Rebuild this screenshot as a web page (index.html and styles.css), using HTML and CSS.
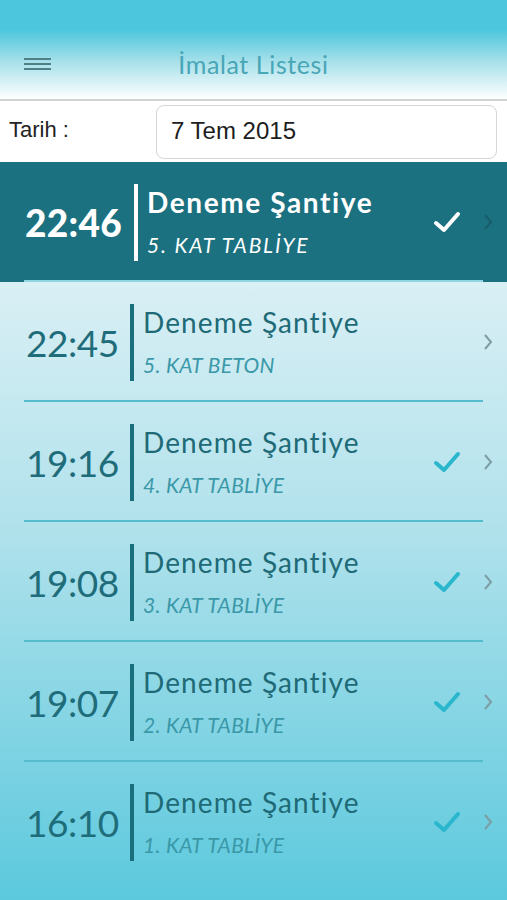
FILE: index.html
```html
<html>
<head>
    <meta charset="utf-8">
    <title>İmalat Listesi</title>
    <link rel="stylesheet" href="styles.css">
</head>

<body>
<div class="screen">
    <div class="navbar">
        <div class="menu">
            <span></span><span></span><span></span>
        </div>
        <div class="title">İmalat Listesi</div>
    </div>

    <div class="date-row">
        <div class="label">Tarih :</div>
        <div class="date-box">7 Tem 2015</div>
    </div>

    <div class="list">
        <div class="item selected">
            <div class="time">22:46</div>
            <div class="bar"></div>
            <div class="info">
                <div class="site">Deneme Şantiye</div>
                <div class="job">5. KAT TABLİYE</div>
            </div>
            <svg class="check" viewBox="0 0 28 24"><path d="M3 13 L11 20 L25 4"/></svg>
            <svg class="chevron" viewBox="0 0 10 18"><path d="M2 2 L8 9 L2 16"/></svg>
        </div>
        <div class="item">
            <div class="time">22:45</div>
            <div class="bar"></div>
            <div class="info">
                <div class="site">Deneme Şantiye</div>
                <div class="job">5. KAT BETON</div>
            </div>
            <svg class="chevron" viewBox="0 0 10 18"><path d="M2 2 L8 9 L2 16"/></svg>
        </div>
        <div class="item">
            <div class="time">19:16</div>
            <div class="bar"></div>
            <div class="info">
                <div class="site">Deneme Şantiye</div>
                <div class="job">4. KAT TABLİYE</div>
            </div>
            <svg class="check" viewBox="0 0 28 24"><path d="M3 13 L11 20 L25 4"/></svg>
            <svg class="chevron" viewBox="0 0 10 18"><path d="M2 2 L8 9 L2 16"/></svg>
        </div>
        <div class="item">
            <div class="time">19:08</div>
            <div class="bar"></div>
            <div class="info">
                <div class="site">Deneme Şantiye</div>
                <div class="job">3. KAT TABLİYE</div>
            </div>
            <svg class="check" viewBox="0 0 28 24"><path d="M3 13 L11 20 L25 4"/></svg>
            <svg class="chevron" viewBox="0 0 10 18"><path d="M2 2 L8 9 L2 16"/></svg>
        </div>
        <div class="item">
            <div class="time">19:07</div>
            <div class="bar"></div>
            <div class="info">
                <div class="site">Deneme Şantiye</div>
                <div class="job">2. KAT TABLİYE</div>
            </div>
            <svg class="check" viewBox="0 0 28 24"><path d="M3 13 L11 20 L25 4"/></svg>
            <svg class="chevron" viewBox="0 0 10 18"><path d="M2 2 L8 9 L2 16"/></svg>
        </div>
        <div class="item last">
            <div class="time">16:10</div>
            <div class="bar"></div>
            <div class="info">
                <div class="site">Deneme Şantiye</div>
                <div class="job">1. KAT TABLİYE</div>
            </div>
            <svg class="check" viewBox="0 0 28 24"><path d="M3 13 L11 20 L25 4"/></svg>
            <svg class="chevron" viewBox="0 0 10 18"><path d="M2 2 L8 9 L2 16"/></svg>
        </div>
    </div>
</div>
</body>
</html>
```

FILE: styles.css
```css
*{
    margin: 0;
    padding: 0;
    box-sizing: border-box;
}
body{
    font-family: 'Lato', 'Noto Sans', sans-serif;
    width: 507px;
    height: 900px;
    overflow: hidden;
}
.screen{
    height: 900px;
    display: flex;
    flex-direction: column;
    background: linear-gradient(to bottom, #e4f4f7 0%, #e0f2f6 240px, #b2e2ec 520px, #5cc9dd 900px);
}
.navbar{
    height: 101px;
    flex: none;
    display: flex;
    align-items: center;
    padding: 30px 0 0 24px;
    background: linear-gradient(to bottom, #4cc6dc 0%, #4cc6dc 30%, #a6e0ea 62%, #ffffff 100%);
    border-bottom: 2px solid #d2d4d4;
}
.menu{
    display: flex;
    flex-direction: column;
    gap: 3px;
    width: 27px;
    margin-top: -2px;
}
.menu span{
    height: 2px;
    background: #4f8088;
}
.title{
    flex: 1;
    text-align: center;
    margin-left: -51px;
    font-size: 25px;
    letter-spacing: 0.6px;
    color: #48a6b6;
    margin-top: -2px;
}
.date-row{
    height: 61px;
    flex: none;
    background: #fff;
    display: flex;
    align-items: center;
    padding: 0 10px 0 9px;
    font-family: 'Liberation Sans', Arial, sans-serif;
    font-size: 22px;
    color: #222;
}
.label{
    width: 147px;
    margin-top: -3px;
}
.date-box{
    flex: 1;
    height: 54px;
    border: 1px solid #d6d6d6;
    border-radius: 8px;
    padding: 0 14px;
    display: flex;
    align-items: center;
    padding-bottom: 2px;
    font-size: 24px;
    color: #1d1d1d;
}
.list{
    flex: 1;
}
.item{
    height: 120px;
    display: flex;
    align-items: center;
    padding: 0 14px 0 26px;
    position: relative;
}
.item::after{
    content: '';
    position: absolute;
    left: 24px;
    right: 24px;
    bottom: 0;
    height: 2px;
    background: #54bccd;
}
.item.last::after{
    display: none;
}
.item.selected{
    background: #1b7180;
    padding-left: 25px;
}
.item.selected::after{
    background: #8fd6e2;
}
.time{
    width: 96px;
    font-size: 37px;
    color: #1f6d7a;
    letter-spacing: -0.5px;
}
.selected .time{
    width: 101px;
    font-weight: 900;
    color: #fff;
    letter-spacing: 0.3px;
}
.bar{
    width: 4px;
    height: 77px;
    background: #1a6f7d;
    margin: 0 9px 0 8px;
}
.selected .bar{
    background: #fff;
}
.info{
    flex: 1;
    margin-top: -2px;
}
.site{
    font-size: 28px;
    line-height: 34px;
    letter-spacing: 1.1px;
    color: #206a77;
}
.selected .site{
    font-weight: 700;
    color: #fff;
    letter-spacing: 1.6px;
}
.job{
    font-size: 21px;
    line-height: 26px;
    font-style: italic;
    color: #3a98a8;
    margin-top: 13px;
    letter-spacing: 0.3px;
}
.selected .job{
    color: #fff;
    letter-spacing: 1.8px;
}
.check{
    width: 28px;
    height: 24px;
    fill: none;
    stroke: #2ab6cc;
    stroke-width: 4;
    stroke-linecap: round;
    stroke-linejoin: round;
    margin-right: 22px;
}
.selected .check{
    stroke: #fff;
}
.chevron{
    width: 10px;
    height: 18px;
    fill: none;
    stroke: #7c9da3;
    stroke-width: 2;
}
.selected .chevron{
    stroke: #175e6a;
}
.item > .chevron:nth-child(4){
    margin-left: 50px;
}
```
